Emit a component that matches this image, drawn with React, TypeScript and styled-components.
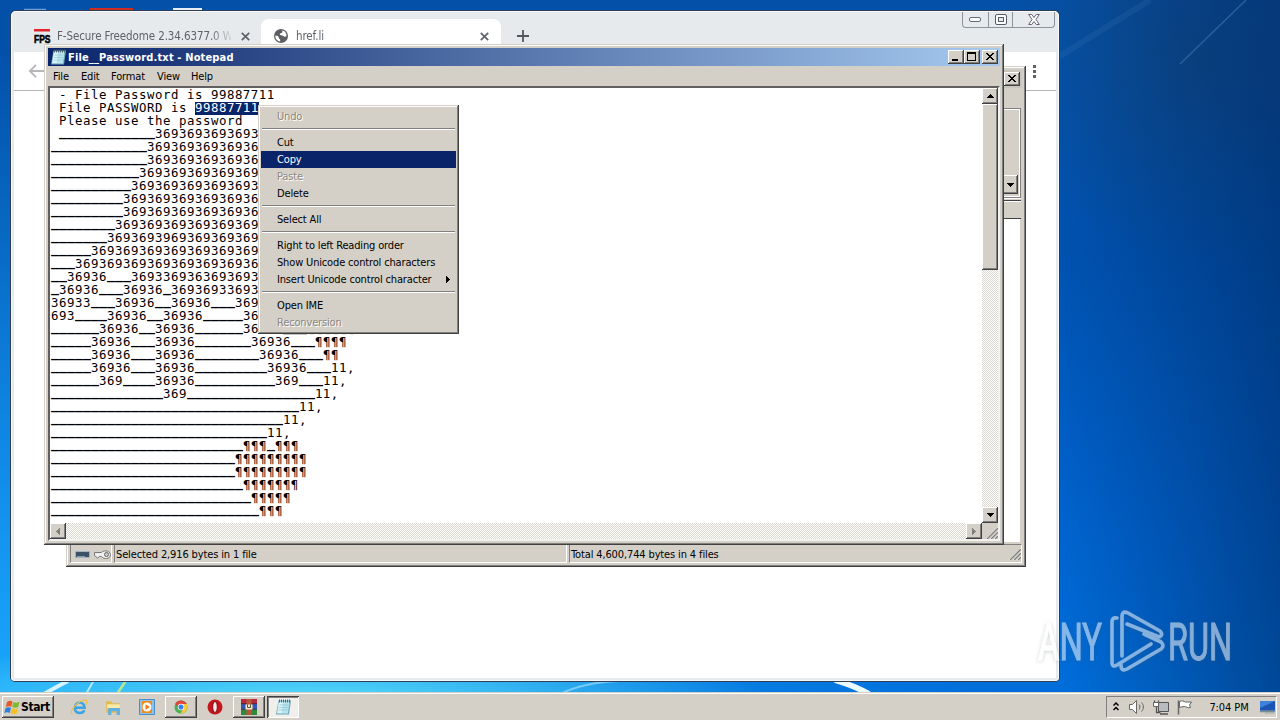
import React from 'react';
import styled, { createGlobalStyle, css } from 'styled-components';

const GlobalStyle = createGlobalStyle`
  * {
    box-sizing: border-box;
  }

  body {
    margin: 0;
    overflow: hidden;
  }
`;

const uiFont = "'DejaVu Sans Condensed', 'DejaVu Sans', sans-serif";

const raised = css`
  background: #d4d0c8;
  box-shadow: inset -1px -1px #404040, inset 1px 1px #fff, inset -2px -2px #808080;
`;

const checker = css`
  background: repeating-conic-gradient(#fff 0 25%, #d9d6ce 0 50%) 0 0 / 2px 2px;
`;

const Desktop = styled.div`
  position: relative;
  display: flex;
  flex-direction: column;
  justify-content: flex-end;
  width: 1280px;
  height: 720px;
  overflow: hidden;
  font-family: ${uiFont};
  font-size: 11px;
  color: #000;
  background:
    radial-gradient(ellipse 460px 60px at 310px 700px, #58dcf8 0, rgba(70, 200, 245, 0) 100%),
    linear-gradient(90deg, rgba(0, 30, 90, 0) 83%, rgba(0, 40, 96, 0.55) 100%),
    radial-gradient(ellipse 200px 200px at 1200px 60px, rgba(20, 70, 120, 0.6), rgba(20, 70, 120, 0)),
    radial-gradient(ellipse 1000px 640px at 0 690px, rgba(30, 175, 255, 0.85) 0, rgba(0, 110, 230, 0) 100%),
    linear-gradient(180deg, #0450a8 0, #0052b0 35%, #0064d0 75%, #0070dc 100%);
`;

const Wallpaper = styled.svg`
  position: absolute;
  left: 0;
  top: 0;
`;

const Window = styled.section<{ x: number; y: number; w: number; h: number }>`
  position: absolute;
  left: ${p => p.x}px;
  top: ${p => p.y}px;
  width: ${p => p.w}px;
  height: ${p => p.h}px;
  display: flex;
  flex-direction: column;
`;

const ClassicWindow = styled(Window)`
  padding: 4px;
  background: #d4d0c8;
  box-shadow: inset -1px -1px #404040, inset 1px 1px #d4d0c8, inset -2px -2px #808080, inset 2px 2px #fff;
`;

/* Browser */

const BrowserWindow = styled(Window)`
  padding: 1px 3px 3px 3px;
  background: #e7eaed;
  border-radius: 5px 5px 4px 4px;
  box-shadow: inset 0 0 0 1px #f6f8fa, 0 0 0 1px #2f3f58;
`;

const TabStrip = styled.div`
  display: flex;
  height: 40px;
  padding-top: 7px;
`;

const Tab = styled.div<{ active?: boolean }>`
  display: flex;
  align-items: center;
  width: ${p => (p.active ? 240 : 247)}px;
  height: 33px;
  padding: ${p => (p.active ? '1px 12px 0 12px' : '1px 11px 0 20px')};
  border-radius: 8px 8px 0 0;
  background: ${p => (p.active ? '#fff' : 'transparent')};
  color: #5f6368;
`;

const TabTitle = styled.span<{ gap: number }>`
  flex: 1;
  margin: 0 10px 0 ${p => p.gap}px;
  overflow: hidden;
  white-space: nowrap;
  font-size: 11.5px;
  letter-spacing: -0.1px;
  mask-image: linear-gradient(90deg, #000 88%, transparent 102%);
`;

const NewTab = styled.div`
  display: flex;
  align-items: center;
  padding-left: 16px;
  height: 34px;
`;

const CaptionGroup = styled.div`
  display: flex;
  width: 93px;
  height: 16px;
  margin: -7px 1px 0 auto;
  border: 1px solid #8c939b;
  border-top: 0;
  border-radius: 0 0 4px 4px;
`;

const CaptionCell = styled.div<{ w: number }>`
  display: flex;
  align-items: center;
  justify-content: center;
  width: ${p => p.w}px;

  & + & {
    border-left: 1px solid #8c939b;
  }
`;

const BrowserToolbar = styled.div`
  display: flex;
  align-items: center;
  justify-content: space-between;
  height: 39px;
  padding: 0 17px 0 14px;
  background: #fff;
  border-bottom: 1px solid #b6b6b6;
`;

const Page = styled.div`
  flex: 1;
  background: #fff;
`;

/* Shared classic controls */

const TitleBar = styled.header<{ inactive?: boolean }>`
  display: flex;
  align-items: center;
  flex: none;
  height: 18px;
  padding: 0 2px;
  color: #fff;
  font-size: 11px;
  font-weight: bold;
  background: ${p =>
    p.inactive ? 'linear-gradient(90deg, #808080, #c9c6bf)' : 'linear-gradient(90deg, #0a246a, #a6caf0)'};
`;

const TitleText = styled.span`
  flex: 1;
  padding-left: 1px;
  white-space: nowrap;
  letter-spacing: 0.15px;
`;

const TitleButton = styled.span<{ gap?: number }>`
  ${raised}
  display: flex;
  width: 16px;
  height: 14px;
  margin-left: ${p => p.gap || 0}px;
`;

const ScrollButton = styled.span`
  ${raised}
  flex: none;
  display: flex;
  align-items: center;
  justify-content: center;
  width: 16px;
  height: 16px;
`;

/* Archive manager */

const ArchiveBody = styled.div`
  flex: 1;
  display: flex;
  flex-direction: column;
  padding: 20px 1px 0 0;
`;

const ToolbarGroup = styled.div`
  height: 90px;
  display: flex;
  justify-content: flex-end;
  align-items: flex-end;
  padding: 0 2px 3px;
  border: 1px solid #808080;
  box-shadow: inset -1px -1px #fff, inset 1px 1px #fff, 0 1px #fff;
`;

const ComboButton = styled(ScrollButton)`
  height: 19px;
`;

const ListHeader = styled.div`
  height: 19px;
  margin-top: 2px;
  border-top: 1px solid #404040;
  border-bottom: 1px solid #404040;
  box-shadow: inset 0 1px #fff;
`;

const FileList = styled.div`
  flex: 1;
  background: #fff;
  border-right: 1px solid #d4d0c8;
`;

const StatusBar = styled.footer`
  display: flex;
  flex: none;
  height: 21px;
  gap: 2px;
  padding-top: 2px;
`;

const StatusPane = styled.div<{ w?: number }>`
  display: flex;
  align-items: center;
  ${p => (p.w ? `width: ${p.w}px;` : 'flex: 1;')}
  padding-left: 1px;
  gap: 3px;
  white-space: nowrap;
  border: 1px solid;
  border-color: #808080 #fff #fff #808080;
`;

const StatusText = styled.span`
  padding-top: 2px;
  letter-spacing: -0.13px;
`;

/* Notepad */

const MenuBar = styled.nav`
  display: flex;
  align-items: center;
  flex: none;
  height: 20px;
  padding-left: 5px;
  gap: 12px;
`;

const MenuLabel = styled.span<{ w: number }>`
  width: ${p => p.w}px;
  white-space: nowrap;
  letter-spacing: -0.15px;
`;

const EditFrame = styled.div`
  flex: 1;
  display: grid;
  grid-template-columns: 1fr 16px;
  grid-template-rows: 1fr 16px;
  border: 2px solid;
  border-color: #606060 #f4f2ee #f4f2ee #606060;
`;

const TextArea = styled.pre`
  margin: 0;
  padding-left: 1px;
  background: #fff;
  overflow: hidden;
  font-family: 'DejaVu Sans Mono', monospace;
  font-size: 12.4px;
  line-height: 13px;
  letter-spacing: 0.535px;
`;

const TextLine = styled.div`
  height: 13px;
`;

const Selected = styled.span`
  display: inline-block;
  height: 13px;
  background: linear-gradient(#fff 1px, #0a246a 1px);
  box-shadow: 0 1px #0a246a;
  color: #fff;
`;

const Underscores = styled.span`
  font-size: 13.29px;
  font-weight: bold;
  letter-spacing: 0;
  line-height: 0;
  vertical-align: 2px;
`;

const VerticalScroll = styled.div`
  ${checker}
  display: flex;
  flex-direction: column;
  justify-content: space-between;
`;

const Thumb = styled.div`
  ${raised}
  height: 166px;
  margin-bottom: auto;
`;

const HorizontalScroll = styled.div`
  ${checker}
  display: flex;
  justify-content: space-between;
`;

const Grip = styled.div`
  display: flex;
  align-items: flex-end;
  justify-content: flex-end;
  background: #d4d0c8;
`;

const StatusGrip = styled(Grip)`
  margin-left: auto;
`;

/* Context menu */

const ContextMenu = styled.ul`
  position: absolute;
  left: 258px;
  top: 105px;
  width: 201px;
  margin: 0;
  padding: 3px;
  list-style: none;
  background: #d4d0c8;
  box-shadow: inset -1px -1px #404040, inset 1px 1px #d4d0c8, inset -2px -2px #808080, inset 2px 2px #fff;
`;

const MenuItem = styled.li<{ active?: boolean; disabled?: boolean }>`
  display: flex;
  align-items: center;
  justify-content: space-between;
  height: 17px;
  padding: 0 6px 0 16px;
  white-space: nowrap;
  letter-spacing: -0.16px;
  background: ${p => (p.active ? '#0a246a' : 'transparent')};
  color: ${p => (p.active ? '#fff' : p.disabled ? '#8a8782' : '#000')};
  ${p => p.disabled && 'text-shadow: 1px 1px #fff;'}
`;

const Separator = styled.li`
  height: 9px;
  padding: 3px 1px;

  &::before {
    content: '';
    display: block;
    height: 0;
    border-top: 1px solid #808080;
    border-bottom: 1px solid #fff;
  }
`;

/* Taskbar */

const Taskbar = styled.footer`
  position: relative;
  display: flex;
  align-items: center;
  height: 28px;
  padding: 2px 3px 0 2px;
  background: #d4d0c8;
  box-shadow: inset 0 1px #d4d0c8, inset 0 2px #fff;
`;

const StartButton = styled.button`
  ${raised}
  display: flex;
  align-items: center;
  width: 52px;
  height: 22px;
  padding: 0 2px;
  gap: 1px;
  border: 0;
  font-family: ${uiFont};
  font-size: 12px;
  font-weight: bold;
  letter-spacing: -0.4px;
  color: #000;
`;

const QuickLaunch = styled.div`
  display: flex;
  gap: 2px;
  margin-left: 9px;
`;

const TaskButton = styled.span<{ state?: 'raised' | 'pressed' }>`
  display: flex;
  align-items: center;
  justify-content: center;
  width: 32px;
  height: 22px;
  ${p => p.state === 'raised' && raised}
  ${p =>
    p.state === 'pressed' &&
    css`
      background: #f1efec;
      box-shadow: inset 1px 1px #404040, inset -1px -1px #fff, inset 2px 2px #808080;
    `}
`;

const Tray = styled.div`
  display: flex;
  align-items: center;
  width: 171px;
  height: 22px;
  margin-left: auto;
  padding: 0 0 0 6px;
  border: 1px solid;
  border-color: #808080 #fff #fff #808080;
`;

const Clock = styled.span`
  flex: 1;
  padding-left: 6px;
  text-align: center;
  white-space: nowrap;
  letter-spacing: -0.1px;
`;

const Watermark = styled.svg`
  position: absolute;
  left: 1030px;
  top: 600px;
`;

const u = (count: number) => '_'.repeat(count);
const p = (count: number) => '¶'.repeat(count);

const noteLines = [
  ' - File Password is 99887711',
  ' File PASSWORD is [99887711]',
  ' Please use the password',
  ` ${u(12)}3693693693693`,
  `${u(12)}36936936936936`,
  `${u(12)}36936936936936`,
  `${u(11)}369369369369369`,
  `${u(10)}3693693693693693`,
  `${u(9)}36936936936936936`,
  `${u(9)}36936936936936936`,
  `${u(8)}369369369369369369`,
  `${u(7)}3693693969369369369`,
  `${u(5)}369369369369369369369`,
  `${u(3)}36936936936936936936936`,
  `${u(2)}36936${u(3)}3693369363693693`,
  `${u(1)}36936${u(3)}36936${u(1)}36936933693`,
  `36933${u(3)}36936${u(2)}36936${u(3)}369`,
  `693${u(4)}36936${u(2)}36936${u(5)}36`,
  `${u(6)}36936${u(2)}36936${u(6)}36936${u(3)}${p(6)}`,
  `${u(5)}36936${u(3)}36936${u(7)}36936${u(3)}${p(4)}`,
  `${u(5)}36936${u(3)}36936${u(8)}36936${u(3)}${p(2)}`,
  `${u(5)}36936${u(3)}36936${u(9)}36936${u(3)}11,`,
  `${u(6)}369${u(4)}36936${u(10)}369${u(3)}11,`,
  `${u(14)}369${u(16)}11,`,
  `${u(31)}11,`,
  `${u(29)}11,`,
  `${u(27)}11,`,
  `${u(24)}${p(3)}${u(1)}${p(3)}`,
  `${u(23)}${p(9)}`,
  `${u(23)}${p(9)}`,
  `${u(24)}${p(7)}`,
  `${u(25)}${p(5)}`,
  `${u(26)}${p(3)}`,
];

const menuItems = [
  { label: 'Undo', disabled: true },
  null,
  { label: 'Cut' },
  { label: 'Copy', active: true },
  { label: 'Paste', disabled: true },
  { label: 'Delete' },
  null,
  { label: 'Select All' },
  null,
  { label: 'Right to left Reading order' },
  { label: 'Show Unicode control characters' },
  { label: 'Insert Unicode control character', submenu: true },
  null,
  { label: 'Open IME' },
  { label: 'Reconversion', disabled: true },
];

const renderLine = (line: string) =>
  line.split(/(_+|\[.*\])/).map((part, i) => {
    if (part.startsWith('_')) return <Underscores key={i}>{part}</Underscores>;
    if (part.startsWith('[')) return <Selected key={i}>{part.slice(1, -1)}</Selected>;
    return part;
  });

const CrossIcon = () => (
  <svg width="9" height="9" viewBox="0 0 9 9">
    <path d="M.8.8l7.4 7.4M8.2.8L.8 8.2" stroke="#5f6368" strokeWidth="1.7" />
  </svg>
);

const CloseGlyph = () => (
  <svg width="16" height="14" shapeRendering="crispEdges">
    <path d="M4 3h2v1h1v1h2V4h1V3h2v1h-1v1h-1v1H9v1h1v1h1v1h1v1h-2V9H9V8H7v1H6v1H4V9h1V8h1V7h1V6H6V5H5V4H4z" />
  </svg>
);

const Arrow = ({ dir, color = '#000' }: { dir: 'up' | 'down' | 'left' | 'right'; color?: string }) => {
  const shapes = {
    up: 'M3 0h1v1h1v1h1v1h1v1H0V3h1V2h1V1h1z',
    down: 'M0 0h7v1H6v1H5v1H4v1H3V3H2V2H1V1H0z',
    left: 'M4 0v7H3V6H2V5H1V4H0V3h1V2h1V1h1V0z',
    right: 'M0 0h1v1h1v1h1v1h1v1H3v1H2v1H1v1H0z',
  };
  const flat = dir === 'up' || dir === 'down';
  return (
    <svg width={flat ? 7 : 4} height={flat ? 4 : 7} shapeRendering="crispEdges">
      <path d={shapes[dir]} fill={color} />
    </svg>
  );
};

const GripLines = () => (
  <svg width="13" height="13">
    <path d="M1 13L13 1M5 13l8-8M9 13l4-4" stroke="#fff" />
    <path d="M2 13L13 2M6 13l7-7M10 13l3-3" stroke="#808080" strokeWidth="1.4" />
  </svg>
);

const NotepadIcon = () => (
  <svg width="17" height="16" viewBox="0 0 16 16">
    <path d="M3 1.500h12.500l-2 14H.500z" fill="#6fa9bb" />
    <path d="M3.200 2.500h11l-1.800 12H1.500z" fill="#b9e4ee" />
    <path d="M3.600 3h4l-1.500 11H2z" fill="#dcf5f9" />
    <path d="M4 6h9M3.600 8.500h9M3.200 11h9" stroke="#8cc4d2" strokeWidth=".7" />
    <path d="M4 .500v3M6 .500v3M8 .500v3M10 .500v3M12 .500v3M14 .500v3" stroke="#44606e" strokeWidth=".9" />
  </svg>
);

const BrowserFrame = () => (
  <BrowserWindow x={11} y={11} w={1048} h={670}>
    <TabStrip>
      <Tab>
        <svg width="17" height="16" viewBox="0 0 17 16">
          <path d="M0 1h16v2.500H0z" fill="#e0262b" />
          <text x="0" y="15" fontFamily="Liberation Sans" fontWeight="bold" fontSize="10.5" textLength="16.500" lengthAdjust="spacingAndGlyphs" stroke="#000" strokeWidth=".6">
            FPS
          </text>
        </svg>
        <TabTitle gap={6}>F-Secure Freedome 2.34.6377.0 Wi</TabTitle>
        <CrossIcon />
      </Tab>
      <Tab active>
        <svg width="16" height="16" viewBox="0 0 16 16">
          <circle cx="8" cy="8" r="7" fill="#5a5e63" />
          <path d="M2.4 7.5c2 0 3.4.8 3.4 2.2 0 1.2 1.4.9 1.4 2.3v1.5C4 13 2 10.600 2.400 7.500zM6.500 2.500C9 2 10 3 9.300 4.200 8.500 5.600 6.800 5 6.800 6.400c0 1.300 2.800.6 3.500 1.700.6 1 2 .8 3.100.2C14 5 11 1.600 6.500 2.500z" fill="#fff" />
        </svg>
        <TabTitle gap={7}>href.li</TabTitle>
        <CrossIcon />
      </Tab>
      <NewTab>
        <svg width="12" height="12">
          <path d="M6 0v12M0 6h12" stroke="#54585d" strokeWidth="1.8" />
        </svg>
      </NewTab>
      <CaptionGroup>
        <CaptionCell w={25}>
          <svg width="12" height="5">
            <rect x=".5" y=".5" width="11" height="4" rx="1.500" fill="#fff" stroke="#666b7a" />
          </svg>
        </CaptionCell>
        <CaptionCell w={25}>
          <svg width="12" height="11">
            <rect x=".5" y=".5" width="11" height="10" rx="1.500" fill="#fff" stroke="#555a66" />
            <rect x="3.500" y="3.500" width="5" height="4" fill="#e7eaed" stroke="#555a66" />
          </svg>
        </CaptionCell>
        <CaptionCell w={42}>
          <svg width="12" height="11">
            <path d="M.7.500h3L6 3.500l2.300-3h3L8 5.500l3.300 5h-3L6 7.500l-2.300 3h-3L4 5.500z" fill="#fff" stroke="#6a6079" />
          </svg>
        </CaptionCell>
      </CaptionGroup>
    </TabStrip>
    <BrowserToolbar>
      <svg width="16" height="14">
        <path d="M16 7H2M8 .8L1.800 7 8 13.200" fill="none" stroke="#b5b7ba" strokeWidth="1.800" />
      </svg>
      <svg width="10" height="14">
        <path d="M4 1h3v3H4zM4 6h3v3H4zM4 11h3v3H4z" fill="#5f6368" />
      </svg>
    </BrowserToolbar>
    <Page />
  </BrowserWindow>
);

const ArchiveWindow = () => (
  <ClassicWindow x={66} y={66} w={960} h={501}>
    <TitleBar inactive>
      <TitleText />
      <TitleButton>
        <CloseGlyph />
      </TitleButton>
    </TitleBar>
    <ArchiveBody>
      <ToolbarGroup>
        <ComboButton>
          <Arrow dir="down" />
        </ComboButton>
      </ToolbarGroup>
      <ListHeader />
      <FileList />
    </ArchiveBody>
    <StatusBar>
      <StatusPane w={42}>
        <svg width="40" height="14">
          <rect x="3.500" y="4.500" width="14" height="6" rx="1" fill="#3c5068" stroke="#9fb2c5" />
          <path d="M5 9.500h8" stroke="#89a" />
          <path d="M22.500 5.500h7c1-2 8-3 9 2 0 5-7 5-9 2h-2l-2 1.500-3-2.500z" fill="#eee" stroke="#777" />
          <circle cx="34.500" cy="7.500" r="2" fill="#ccc" stroke="#666" />
        </svg>
      </StatusPane>
      <StatusPane w={453}>
        <StatusText>Selected 2,916 bytes in 1 file</StatusText>
      </StatusPane>
      <StatusPane>
        <StatusText>Total 4,600,744 bytes in 4 files</StatusText>
        <StatusGrip>
          <GripLines />
        </StatusGrip>
      </StatusPane>
    </StatusBar>
  </ClassicWindow>
);

const NotepadWindow = () => (
  <ClassicWindow x={44} y={44} w={960} h={501}>
    <TitleBar>
      <NotepadIcon />
      <TitleText>File__Password.txt - Notepad</TitleText>
      <TitleButton>
        <svg width="16" height="14">
          <path d="M4 9h6v2H4z" />
        </svg>
      </TitleButton>
      <TitleButton>
        <svg width="16" height="14" shapeRendering="crispEdges">
          <path d="M3 2h9v9H3zM4 4v6h7V4z" fillRule="evenodd" />
        </svg>
      </TitleButton>
      <TitleButton gap={2}>
        <CloseGlyph />
      </TitleButton>
    </TitleBar>
    <MenuBar>
      <MenuLabel w={16}>File</MenuLabel>
      <MenuLabel w={18}>Edit</MenuLabel>
      <MenuLabel w={34}>Format</MenuLabel>
      <MenuLabel w={22}>View</MenuLabel>
      <MenuLabel w={22}>Help</MenuLabel>
    </MenuBar>
    <EditFrame>
      <TextArea>
        {noteLines.map((line, i) => (
          <TextLine key={i}>{renderLine(line)}</TextLine>
        ))}
      </TextArea>
      <VerticalScroll>
        <ScrollButton>
          <Arrow dir="up" />
        </ScrollButton>
        <Thumb />
        <ScrollButton>
          <Arrow dir="down" />
        </ScrollButton>
      </VerticalScroll>
      <HorizontalScroll>
        <ScrollButton>
          <Arrow dir="left" color="#808080" />
        </ScrollButton>
        <ScrollButton>
          <Arrow dir="right" color="#808080" />
        </ScrollButton>
      </HorizontalScroll>
      <Grip>
        <GripLines />
      </Grip>
    </EditFrame>
  </ClassicWindow>
);

const WindowsFlag = () => (
  <svg width="16" height="17" viewBox="0 0 16 17">
    <path d="M3 3c2-1.500 4-1.500 5.500-.5L7.300 7.800C5.500 7 4 7 1.800 8z" fill="#e8592a" />
    <path d="M9.300 3c2 1 4 1 6.200-.2L14.200 8c-2 1-4 1-6 .1z" fill="#7fba2c" />
    <path d="M1.600 9C3.500 8 5.300 8 7 8.800L5.800 14C4 13 2.500 13 .3 14z" fill="#2f7fd8" />
    <path d="M8 9.200c2 .9 4 .9 6 0L12.700 14.500c-2 1-4 .8-6-.2z" fill="#f5c022" />
  </svg>
);

const DesktopTaskbar = () => (
  <Taskbar>
    <StartButton>
      <WindowsFlag />
      Start
    </StartButton>
    <QuickLaunch>
      <TaskButton>
        <svg width="18" height="18" viewBox="0 0 18 18">
          <path d="M4.800 9.800h9.800c0-7-9.800-7-9.800.2 0 6 7.800 6.200 9.500 2.200" fill="none" stroke="#3aa4e6" strokeWidth="2.600" />
          <path d="M2 16C-1 12 10 1 16 2.200c1.600.4.800 3-.3 4.300" fill="none" stroke="#edc14b" strokeWidth="1.300" />
        </svg>
      </TaskButton>
      <TaskButton>
        <svg width="17" height="17" viewBox="0 0 16 16">
          <path d="M1 2h5l1 2h7v9H1z" fill="#e3bb52" />
          <path d="M2 5h12v4H2z" fill="#f9eaa9" />
          <path d="M3 15V8.500h11V15h-3v-3.500H6V15z" fill="#5fb0e0" />
        </svg>
      </TaskButton>
      <TaskButton>
        <svg width="16" height="16" viewBox="0 0 16 16">
          <path d="M.500.500h15v15H.500z" fill="#8ec2ec" stroke="#4b8dc4" />
          <path d="M3 2h10v12H3z" fill="#f08a1a" />
          <circle cx="8" cy="8" r="4.500" fill="#fff" />
          <path d="M6.500 5.200L11 8l-4.500 2.800z" fill="#f07a10" />
        </svg>
      </TaskButton>
      <TaskButton state="raised">
        <svg width="14" height="14" viewBox="0 0 16 16">
          <circle cx="8" cy="8" r="7.500" fill="#4caf50" />
          <path d="M1.500 4.200A7.500 7.500 0 0 1 14.500 4.500H8L5 9z" fill="#e0443a" />
          <path d="M14.500 4.500A7.500 7.500 0 0 1 7.500 15.500L11 9 8 4.500z" fill="#f8cb36" />
          <circle cx="8" cy="8" r="3.700" fill="#fff" />
          <circle cx="8" cy="8" r="2.900" fill="#3b82e8" />
        </svg>
      </TaskButton>
      <TaskButton>
        <svg width="16" height="16" viewBox="0 0 16 16">
          <circle cx="8" cy="8" r="7.500" fill="#c4161c" />
          <ellipse cx="8" cy="8" rx="2.300" ry="5.500" fill="#f7e9e9" stroke="#7c0c10" />
        </svg>
      </TaskButton>
      <TaskButton state="raised">
        <svg width="16" height="16" viewBox="0 0 16 16">
          <path d="M0 0h16v5H0z" fill="#b52b3e" />
          <path d="M0 5h16v5.500H0z" fill="#3557b0" />
          <path d="M0 10.500h16V16H0z" fill="#2e8a3b" />
          <path d="M0 4.700h16M0 10.300h16" stroke="#3a2030" strokeWidth=".8" />
          <path d="M5.500 0h5v16h-5z" fill="#b8563a" />
          <path d="M4.500 5.500h7v5h-7z" fill="#f3e9c8" />
          <path d="M6.500 5.500v3h3v-3" fill="none" stroke="#553" />
        </svg>
      </TaskButton>
      <TaskButton state="pressed">
        <NotepadIcon />
      </TaskButton>
    </QuickLaunch>
    <Tray>
      <svg width="8" height="12">
        <path d="M.5 4.500L3 2l2.500 2.500M.5 9L3 6.500 5.500 9" fill="none" stroke="#000" strokeWidth="1.500" />
      </svg>
      <svg width="72" height="18" viewBox="0 0 72 18" fill="none" stroke="#666">
        <path d="M8.500 6.500h3l4-4v13l-4-4h-3z" fill="#fff" />
        <path d="M18 6.500c1.200 1.500 1.200 3.500 0 5M20.500 4.500c2.500 2.500 2.500 6.500 0 9" />
        <path d="M37.500 4.500h10v9h-10z" fill="#b8bcc0" stroke="#555" />
        <path d="M39 16h8M33.500 2.500v4h4v-4M35.500 6.500v8h4" stroke="#555" strokeWidth="1.300" />
        <path d="M32.500 4.500h5v4h-5z" fill="#fff" />
        <path d="M57.500 16.500v-14" strokeWidth="1.500" />
        <path d="M58.500 3.500c3-1.500 4 0 6 .500h6l-2 3 1 2.500c-3 1-4-1-6-1s-3 .5-5 1z" fill="#fff" />
      </svg>
      <Clock>7:04 PM</Clock>
      <svg width="17" height="16">
        <path d="M1 2h15v10H1z" fill="#1d54b4" />
        <path d="M1 2h15L1 9z" fill="#3d82d8" />
        <path d="M1 12h15v1H1zM6 14h9" fill="#20304c" stroke="#9aa" />
      </svg>
    </Tray>
  </Taskbar>
);

const App: React.FC = () => (
  <>
    <GlobalStyle />
    <Desktop>
      <Wallpaper width="1280" height="720">
        <path d="M24 9.500h22" stroke="#6f9ed8" strokeWidth="1.500" fill="none" />
        <path d="M90 8h43v3H90z" fill="#cf2b20" />
        <path d="M173 8h29v3h-29z" fill="#e9eef4" />
        <path d="M1180 64L1246 0" stroke="#5c93c4" strokeWidth="1.500" opacity=".4" />
        <path d="M1060 56L1150 0" stroke="#5c93c4" strokeWidth="6" opacity=".12" />
        <path d="M44 694q14-8 24-13" stroke="#d8f2ff" strokeWidth="4" fill="none" />
        <path d="M86 694l8-14" stroke="#b9e8fa" strokeWidth="2" />
        <path d="M117 694l10-15" stroke="#b8e890" strokeWidth="2.500" />
        <path d="M560 694q25-12 60-13" stroke="#9adcff" strokeWidth="2" fill="none" opacity=".7" />
        <path d="M835 680q20 6 34 14" stroke="#eafaff" strokeWidth="6" fill="none" />
      </Wallpaper>
      <BrowserFrame />
      <ArchiveWindow />
      <NotepadWindow />
      <ContextMenu>
        {menuItems.map((item, i) =>
          item ? (
            <MenuItem key={i} active={item.active} disabled={item.disabled}>
              {item.label}
              {item.submenu && <Arrow dir="right" />}
            </MenuItem>
          ) : (
            <Separator key={i} />
          )
        )}
      </ContextMenu>
      <DesktopTaskbar />
      <Watermark width="250" height="85">
        <defs>
          <filter id="soft" x="-20%" y="-20%" width="140%" height="140%">
            <feDropShadow dx="0" dy="1" stdDeviation="2" floodColor="#456" floodOpacity=".5" />
          </filter>
        </defs>
        <g filter="url(#soft)" fill="#fff" opacity=".52" fontFamily="Roboto" fontSize="52" stroke="#fff">
          <text x="8" y="60" textLength="64" lengthAdjust="spacingAndGlyphs" strokeWidth="1">
            ANY
          </text>
          <text x="138" y="60" textLength="64" lengthAdjust="spacingAndGlyphs" strokeWidth="1">
            RUN
          </text>
          <g fill="none" strokeWidth="3.6" strokeLinejoin="round" strokeLinecap="round">
            <path d="M87 18q-5-1-5 4v40q0 6 5 3l34-21" />
            <path d="M92 56V17q0-7 6-4l32 18q4 4-1 6l-32-13" />
            <path d="M91 65q0 7 6 4l34-20q4-3 0-7l-17-8" />
          </g>
        </g>
      </Watermark>
    </Desktop>
  </>
);

export default App;
